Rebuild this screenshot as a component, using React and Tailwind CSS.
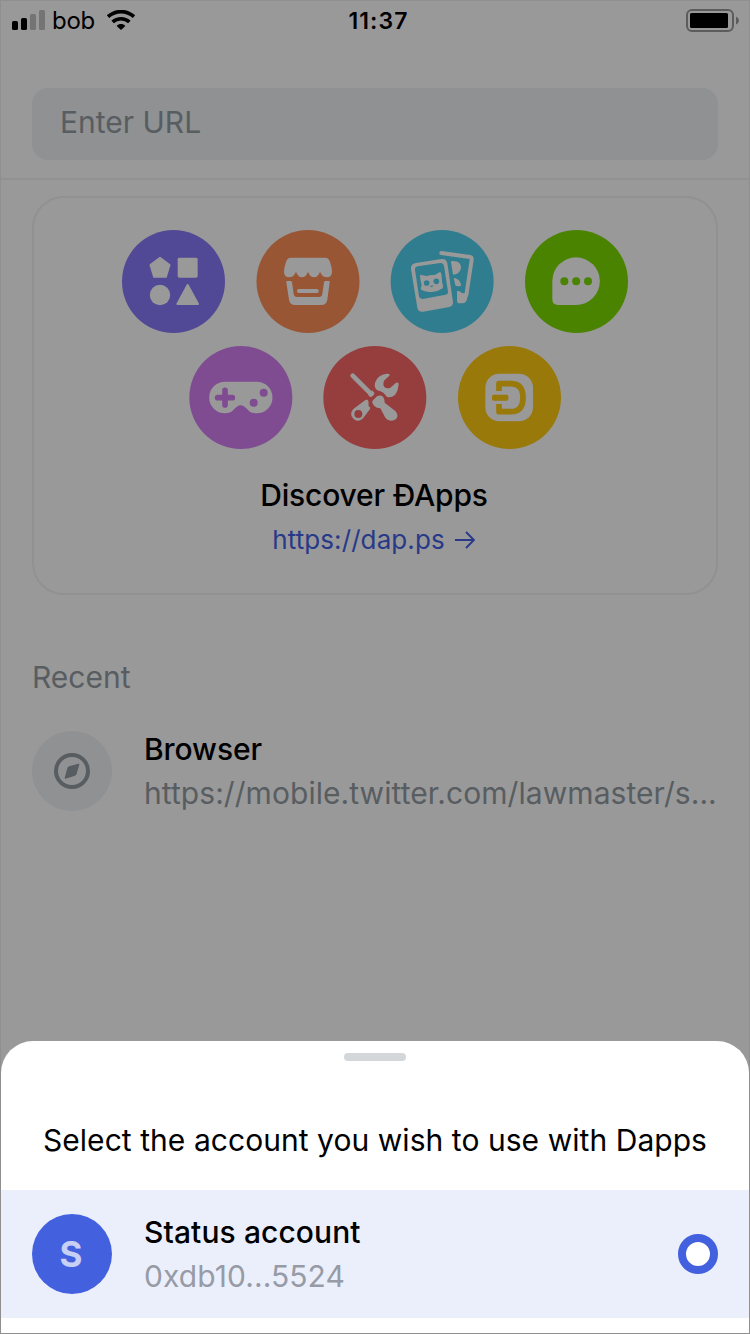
function Disc({ box, color, label, shift = 0, children }) {
  const [x, y, w] = box.split(" ").map(Number);
  return (
    <svg viewBox={box} className="h-[103px] w-[103px] shrink-0 overflow-visible" role="img" aria-label={label}>
      <g transform={`translate(${shift} 0)`} fill="#999999">
        <circle cx={x + w / 2} cy={y + w / 2} r={w / 2} fill={color} />
        {children}
      </g>
    </svg>
  );
}

function StatusBar() {
  return (
    <header className="flex h-[39px] items-center justify-between pl-[11px] pr-[10px] text-black">
      <div className="flex w-[200px] items-center">
        <svg viewBox="0 0 33 20" className="mb-px h-5 w-[33px]">
          <rect x="0" y="11" width="6" height="9" rx="1.6" />
          <rect x="9" y="8" width="6" height="12" rx="1.6" />
          <rect x="18" y="4" width="6" height="16" rx="1.6" fill="#747474" />
          <rect x="27" y="0" width="6" height="20" rx="1.6" fill="#747474" />
        </svg>
        <span className="ml-[7px] text-[24px] leading-6 tracking-[-0.3px]">bob</span>
        <svg viewBox="0 0 84 60" className="mb-px ml-3 h-5 w-7" fill="none" stroke="#000" strokeWidth="11">
          <path d="M3 20C26 0 58 0 81 20" />
          <path d="M17 36C31 23 53 23 67 36" />
          <path d="M29 48C36 40 48 40 55 48L42 60Z" fill="#000" stroke="none" />
        </svg>
      </div>
      <span className="pl-[6px] pt-px text-[23px] font-semibold tracking-[1.1px]">11:37</span>
      <div className="flex w-[200px] justify-end">
        <svg viewBox="0 0 53 23" className="h-[23px] w-[53px]">
          <rect x="1" y="1" width="46" height="21" rx="5" fill="none" stroke="#5c5c5c" strokeWidth="2" />
          <rect x="4" y="4" width="38" height="15" rx="1.5" />
          <path d="M50 7.5Q53 9 53 11.5T50 15.5Z" fill="#5c5c5c" />
        </svg>
      </div>
    </header>
  );
}

function Categories() {
  return (
    <div className="flex flex-col items-center gap-[13px]">
      <div className="flex gap-[31.3px]">
        <Disc box="36 30 309 309" color="#514995" label="All">
          <path d="M150 113L179 135L168 171H132L121 135Z" stroke="#999999" strokeWidth="5" strokeLinejoin="round" />
          <rect x="203" y="113" width="60" height="60" rx="5" />
          <circle cx="150" cy="225" r="30.5" />
          <path d="M233 195L264 252H202Z" stroke="#999999" strokeWidth="6" strokeLinejoin="round" />
        </Disc>
        <Disc box="439.5 30 309 309" color="#985635" label="Marketplaces" shift={1.5}>
          <path d="M543 113H645Q655 113 659 123Q666 142 666 155Q666 172 650 172Q637 172 630 155Q624 172 612 172Q600 172 594 155Q588 172 576 172Q564 172 558 155Q551 172 538 172Q522 172 522 155Q522 142 529 123Q533 113 543 113Z" />
          <path d="M529 187Q528 183 532 183H541Q545 183 546 187L551 222Q552 231 562 231H626Q636 231 637 222L642 187Q643 183 647 183H656Q660 183 659 187L652 239Q649 255 634 255H555Q540 255 537 239Z" />
          <rect x="561" y="207" width="65" height="12" rx="5" />
        </Disc>
        <Disc box="32 30 309 309" color="#317d90" label="Collectibles" shift={-1}>
          <path d="M184 99L270 111Q276 112 275 119L259 225" fill="none" stroke="#999999" strokeWidth="12" strokeLinecap="round" strokeLinejoin="round" />
          <path d="M216 123C237 122 244 133 243 144C241 157 230 164 219 164L213 127Q213 123 216 123Z" />
          <path d="M221 174C234 175 242 184 243 197Q232 201 226 196Z" />
          <path d="M231 213C243 213 244 221 252 220C258 219 257 212 266 212L261 238Q258 250 247 250H239Q231 250 231 242Z" />
          <path fillRule="evenodd" d="M108 129L184 117Q199 115 202 130L219 246Q220 258 208 261L129 275Q115 277 112 263L93 147Q91 132 108 129ZM113 139L181 129Q190 128 192 137L204 215Q205 222 197 224L128 237Q119 238 117 229L105 150Q104 141 113 139Z" />
          <path d="M120 164L140 168Q153 164 164 165L180 156Q185 157 185 172L187 190Q191 198 188 205Q174 215 157 216Q135 216 124 209Q120 204 125 197L121 178Z" />
          <circle cx="140" cy="189" r="8.500" fill="#317d90" />
          <circle cx="169" cy="184" r="8.500" fill="#317d90" />
          <path d="M149 198L160 196L156 202Z" fill="#317d90" />
        </Disc>
        <Disc box="435 30 309 309" color="#4a8300" label="Social networks">
          <path d="M588 112A71 71 0 0 1 588 255H534Q517 255 517 238V183A71 71 0 0 1 588 112Z" />
          <g fill="#4a8300">
            <circle cx="553" cy="184" r="12" />
            <circle cx="588.500" cy="184" r="12" />
            <circle cx="624" cy="184" r="12" />
          </g>
        </Disc>
      </div>
      <div className="flex gap-[31.3px]">
        <Disc box="28 18 309 309" color="#7f4c92" label="Games" shift={1}>
          <path d="M135 125H230A47.500 47.500 0 0 1 230 220Q213 220 204 210Q192 196 182 196Q172 196 160 210Q151 220 135 220A47.500 47.500 0 0 1 135 125Z" />
          <path d="M135 151V195M113 173H157" stroke="#7f4c92" strokeWidth="17" strokeLinecap="round" />
          <circle cx="221" cy="188" r="12" fill="#7f4c92" />
          <circle cx="251" cy="158" r="12" fill="#7f4c92" />
        </Disc>
        <Disc box="431 18 309 309" color="#963d3d" label="Utilities" shift={1}>
          <path d="M519 107L573 161" stroke="#999999" strokeWidth="14" strokeLinecap="round" />
          <path d="M565 163L577 151L584 158Q585 161 582 165L575 171Q571 172 568 168Z" />
          <path d="M621 101Q633 100 629 107L613 122Q609 134 614 141Q622 147 632 143L649 128Q657 125 657 133Q656 151 648 162Q638 174 622 171Q612 155 597 152Q582 147 586 128Q594 104 621 101Z" />
          <path d="M580 181L592 169Q598 165 606 167Q615 172 615 188L647 213Q656 224 652 233Q647 242 633 242Q622 240 617 233L602 205L592 203Q582 199 578 189Q577 184 580 181Z" />
          <path d="M558 181Q563 178 565 184V198Q573 202 569 208L551 232A19 19 0 1 1 523 207Z" stroke="#999999" strokeWidth="3" strokeLinejoin="round" />
          <circle cx="536" cy="222" r="12" fill="#963d3d" />
        </Disc>
        <Disc box="264 18 309 309" color="#997909" label="Other">
          <rect x="346" y="101" width="143" height="143" rx="42" />
          <path d="M387 153V131H422Q459 131 459 173Q459 215 422 215H387V192" fill="none" stroke="#997909" strokeWidth="17" strokeLinejoin="round" />
          <rect x="366" y="164" width="49" height="18" rx="5" fill="#997909" />
        </Disc>
      </div>
    </div>
  );
}

export default function App() {
  return (
    <div className="flex h-[1334px] w-[750px] flex-col overflow-hidden border border-[#8f8f8f] bg-[#999999] font-['Inter',sans-serif] text-[30px] text-black">
      <StatusBar />
      <div className="h-[140px] shrink-0 border-b-2 border-[#8f9193] px-[31px] pt-12">
        <div className="flex h-[72px] items-center rounded-2xl bg-[#8f9193] px-7 pb-[3px] text-[#585d61]">Enter URL</div>
      </div>
      <main className="flex grow flex-col px-[31px] pt-4">
        <section className="flex h-[399px] shrink-0 flex-col items-center rounded-[32px] border-2 border-[#8f9193] pt-8">
          <Categories />
          <h1 className="mt-[26px] pr-[2px] text-[30px] font-medium leading-10 tracking-[-0.15px]">Discover ÐApps</h1>
          <a className="mt-[5px] flex items-center pr-[3px] text-[26px] leading-10 tracking-[0.1px] text-[#283989]">
            https://dap.ps
            <svg viewBox="0 0 20 18" className="ml-[10px] h-[18px] w-5" fill="none" stroke="currentColor" strokeWidth="1.900">
              <path d="M0 9H18.500M11 1L19 9L11 17" />
            </svg>
          </a>
        </section>
        <h2 className="mt-[62px] leading-10 text-[#585d61]">Recent</h2>
        <div className="mt-[34px] flex h-20 items-center gap-8">
          <div className="flex size-20 shrink-0 items-center justify-center rounded-full bg-[#8f9193]">
            <svg viewBox="0 0 108 108" className="size-9">
              <circle cx="54" cy="54" r="48" fill="none" stroke="#585d61" strokeWidth="12" />
              <path d="M74 34L66 62Q65 65 62 66L34 75L42 46Q43 43 46 42Z" fill="#585d61" stroke="#585d61" strokeWidth="4" strokeLinejoin="round" />
            </svg>
          </div>
          <div className="leading-[44px]">
            <div className="font-medium tracking-[-0.08px]">Browser</div>
            <div className="whitespace-nowrap tracking-[0.06px] text-[#585d61]">https://mobile.twitter.com/lawmaster/s...</div>
          </div>
        </div>
      </main>
      <section className="flex h-[292px] shrink-0 flex-col rounded-t-[32px] bg-white">
        <div className="mt-3 h-2 w-[62px] self-center rounded-full bg-[#d3d7da]" />
        <p className="mt-[59px] text-center leading-10 tracking-[0.05px]">Select the account you wish to use with Dapps</p>
        <div className="mt-[30px] flex h-32 items-center bg-[#ebeffc] px-[31px]">
          <div className="flex size-20 items-center justify-center rounded-full bg-[#4360df] pr-[2px] text-[35px] font-bold text-[#c7cff5]">S</div>
          <div className="ml-8 grow leading-[44px]">
            <div className="font-medium tracking-[0.1px]">Status account</div>
            <div className="tracking-[0.08px] text-[#979ba5]">0xdb10...5524</div>
          </div>
          <div className="size-10 rounded-full border-8 border-[#4360df] bg-white" />
        </div>
      </section>
    </div>
  );
}
